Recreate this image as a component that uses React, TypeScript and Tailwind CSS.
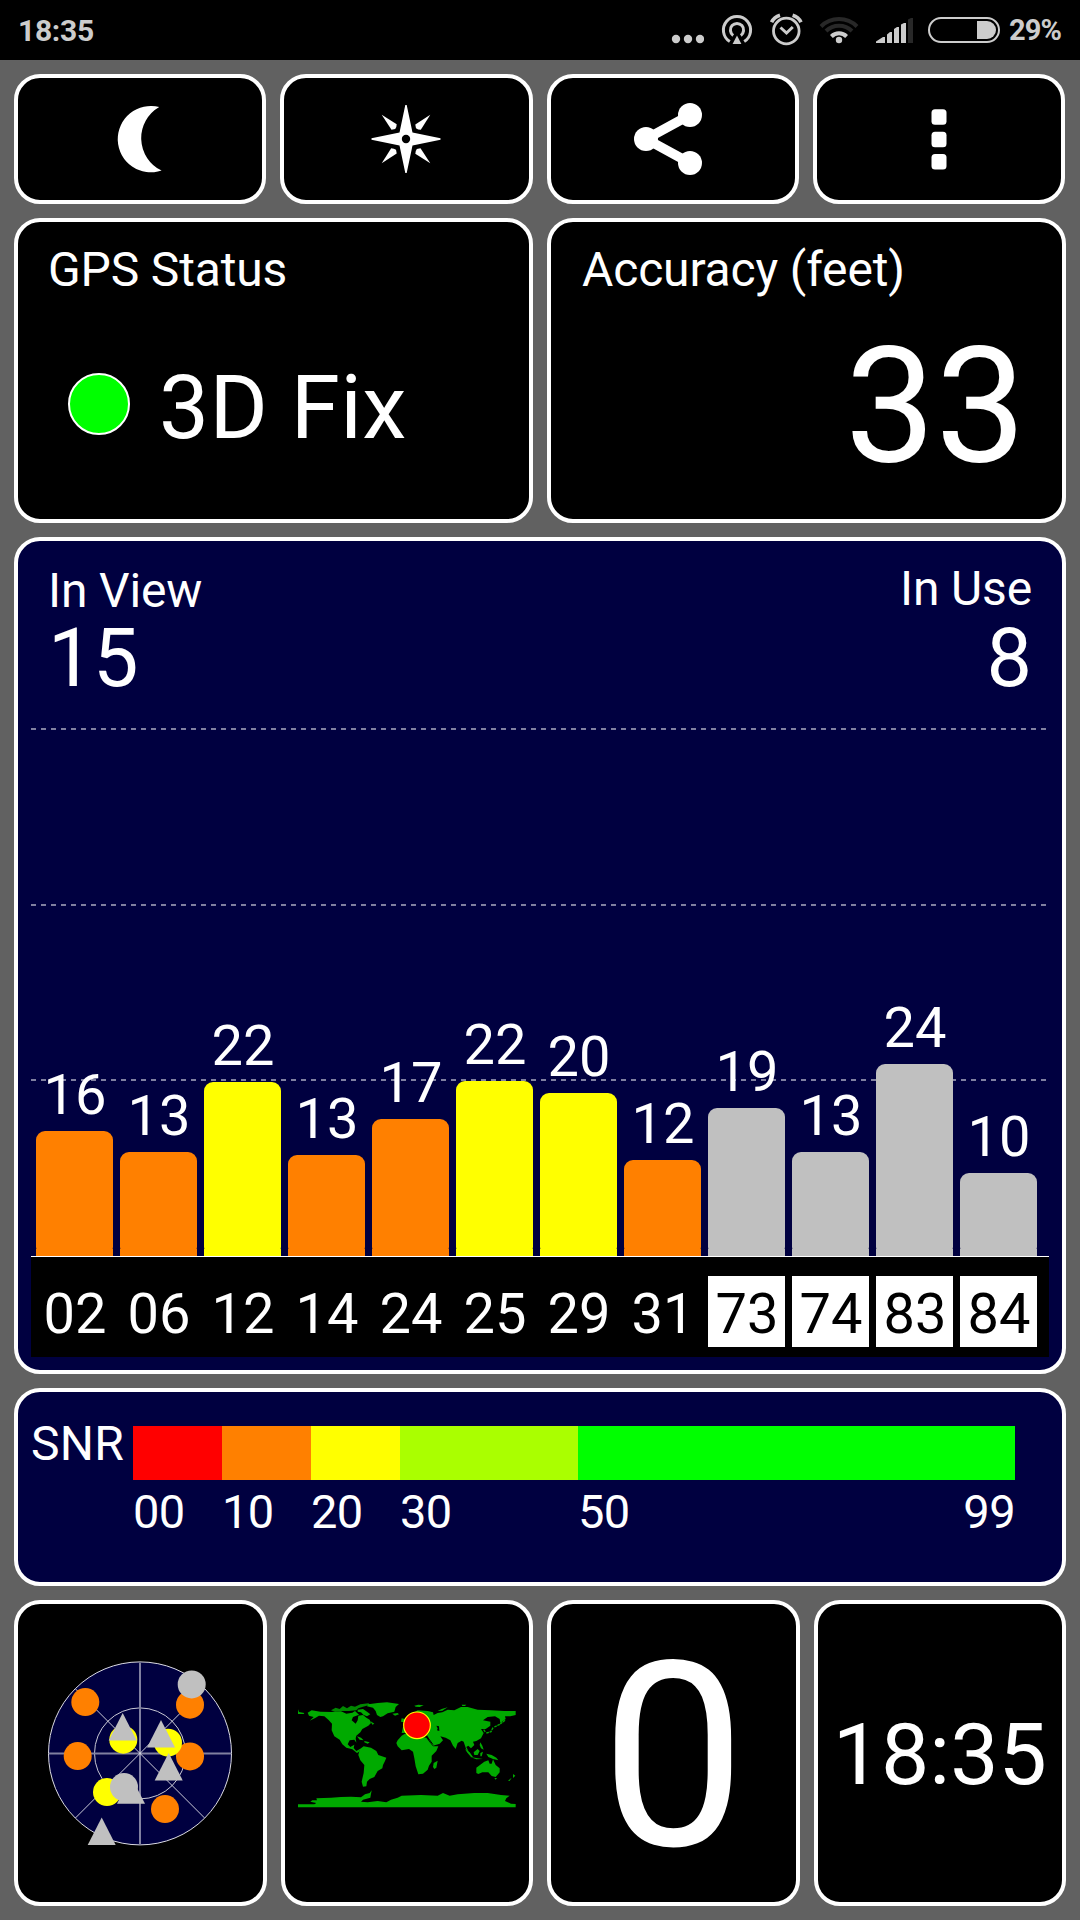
import type { ReactNode } from 'react';
import clsx from 'clsx';

interface Satellite {
  prn: string;
  snr: number;
  height: number;
  color: string;
  glonass?: boolean;
}

const SATELLITES: Satellite[] = [
  { prn: '02', snr: 16, height: 125, color: 'bg-[#ff8000]' },
  { prn: '06', snr: 13, height: 104, color: 'bg-[#ff8000]' },
  { prn: '12', snr: 22, height: 174, color: 'bg-[#ffff00]' },
  { prn: '14', snr: 13, height: 101, color: 'bg-[#ff8000]' },
  { prn: '24', snr: 17, height: 137, color: 'bg-[#ff8000]' },
  { prn: '25', snr: 22, height: 175, color: 'bg-[#ffff00]' },
  { prn: '29', snr: 20, height: 163, color: 'bg-[#ffff00]' },
  { prn: '31', snr: 12, height: 96, color: 'bg-[#ff8000]' },
  { prn: '73', snr: 19, height: 148, color: 'bg-[#c0c0c0]', glonass: true },
  { prn: '74', snr: 13, height: 104, color: 'bg-[#c0c0c0]', glonass: true },
  { prn: '83', snr: 24, height: 192, color: 'bg-[#c0c0c0]', glonass: true },
  { prn: '84', snr: 10, height: 83, color: 'bg-[#c0c0c0]', glonass: true },
];

const SNR_SCALE = [
  { from: '00', style: 'w-[89px]', color: 'bg-[#ff0000]' },
  { from: '10', style: 'w-[89px]', color: 'bg-[#ff8000]' },
  { from: '20', style: 'w-[89px]', color: 'bg-[#ffff00]' },
  { from: '30', style: 'w-[178px]', color: 'bg-[#aaff00]' },
  { from: '50', to: '99', style: 'w-[437px]', color: 'bg-[#00ff00]' },
];

function Card({ className, children }: { className?: string; children: ReactNode }) {
  return (
    <div className={clsx('rounded-[26px] border-4 border-white', className)}>{children}</div>
  );
}

function StatusBar() {
  return (
    <div className="flex h-[60px] items-center justify-between bg-black pl-[18px] text-[#cccccc]">
      <span className="mt-px text-[30px] leading-none font-bold tracking-[-0.3px]">18:35</span>

      <div className="flex w-[409px] items-center">
        <svg width="33" height="60" viewBox="671 0 33 60" fill="currentColor">
          <circle cx="676" cy="39" r="4.2" />
          <circle cx="688" cy="39" r="4.2" />
          <circle cx="700" cy="39" r="4.2" />
        </svg>

        {/* 핫스팟 */}
        <svg className="ml-[17px]" width="32" height="60" viewBox="721 0 32 60" fill="none" stroke="currentColor" strokeWidth="3">
          <path d="M729.8 41.6A13.6 13.6 0 1 1 744.2 41.6" />
          <path d="M733.2 35.4A6.6 6.6 0 1 1 740.8 35.4" />
          <path d="M737 35.5L741.4 44H732.6Z" fill="currentColor" stroke="none" />
        </svg>

        {/* 알람 */}
        <svg className="ml-[17px]" width="33" height="60" viewBox="770 0 33 60" fill="none" stroke="currentColor" strokeWidth="2.8">
          <circle cx="786.3" cy="31" r="12.8" />
          <path d="M780.5 27.5L786.5 33L792.8 27" strokeWidth="3" />
          <path d="M771.6 22.2Q774 17 780 15.2" strokeWidth="3.6" />
          <path d="M801 22.2Q798.6 17 792.6 15.2" strokeWidth="3.6" />
        </svg>

        {/* 와이파이 */}
        <svg className="ml-4" width="40" height="60" viewBox="819 0 40 60" fill="none" strokeWidth="4">
          <path d="M821 26.5A25.5 25.5 0 0 1 857 26.5" stroke="#282828" />
          <path d="M826 31A18.5 18.5 0 0 1 852 31" stroke="#282828" />
          <path d="M831.4 36.5A10.8 10.8 0 0 1 846.6 36.5" stroke="currentColor" />
          <circle cx="839" cy="40" r="3.2" fill="currentColor" />
        </svg>

        {/* 신호 세기 */}
        <svg className="ml-4" width="39" height="60" viewBox="875 0 39 60" fill="currentColor">
          <path d="M876 43V41.5L883 37H885V43Z" />
          <path d="M887 43V34.5L890 32H892V43Z" />
          <path d="M894 43V29L897 27H899V43Z" />
          <path d="M901 43V24.5L904 23H906V43Z" />
          <path d="M908 43V19.5L911 18H913V43Z" fill="#282828" />
        </svg>

        <div className="ml-[14px] flex h-[26px] w-[72px] items-center justify-end rounded-full border-2 border-current pr-[2px]">
          <div className="h-[18px] w-[19px] rounded-r-full bg-current" />
        </div>
        <span className="mt-px ml-[9px] text-[29px] leading-none font-bold tracking-[-0.9px]">29%</span>
      </div>
    </div>
  );
}

function Toolbar() {
  const button = 'flex h-[130px] items-center justify-center bg-black';

  return (
    <div className="mr-px grid grid-cols-4 gap-[14px]">
      <Card className={button}>
        <svg width="80" height="80" viewBox="-40.8 -40 80 80" fill="white">
          <path d="M18.4 -32A33.2 33.2 0 1 0 20.8 31.6A36 36 0 0 1 18.4 -32Z" />
        </svg>
      </Card>
      <Card className={button}>
        <svg width="80" height="80" viewBox="-40 -40 80 80" fill="white">
          <path d="M-.7 -34H.7L6.5 -6.5L34.5 -.7V.7L6.5 6.5L.7 34H-.7L-6.5 6.5L-34.5 .7V-.7L-6.5 -6.5Z" />
          {[0, 90, 180, 270].map((angle) => (
            <path
              key={angle}
              d="M24.3 -24.3L9.3 -14.5L10 -10.8Q12 -9.3 14.8 -9.3Z"
              transform={`rotate(${angle})`}
            />
          ))}
          <circle r="4.2" fill="black" />
        </svg>
      </Card>
      <Card className={button}>
        <svg width="80" height="80" viewBox="-40 -40 80 80" fill="white">
          <path d="M17 -24L-27 0L17 24" fill="none" stroke="white" strokeWidth="9.5" />
          <circle cx="-27" cy="0" r="12" />
          <circle cx="17" cy="-24" r="12" />
          <circle cx="17" cy="24" r="12" />
        </svg>
      </Card>
      <Card className={button}>
        <svg width="80" height="80" viewBox="-40 -40 80 80" fill="white">
          <rect x="-7.5" y="-29.7" width="15" height="15.4" rx="3.5" />
          <rect x="-7.5" y="-7.2" width="15" height="15.4" rx="3.5" />
          <rect x="-7.5" y="15" width="15" height="15.4" rx="3.5" />
        </svg>
      </Card>
    </div>
  );
}

function SatelliteChart() {
  return (
    <Card className="h-[837px] bg-[#000040]">
      <div className="flex h-[187px] justify-between pt-[26px] pr-[30px] pl-[30px]">
        <div>
          <div className="text-5xl leading-none tracking-[-0.15px]">In View</div>
          <div className="mt-[3px] text-[81px] leading-none tracking-[-0.5px]">15</div>
        </div>
        <div className="-mt-[2px] text-right">
          <div className="text-5xl leading-none tracking-[-0.15px]">In Use</div>
          <div className="mt-[5px] text-[81px] leading-none">8</div>
        </div>
      </div>

      <div className="mr-[13px] ml-[13px]">
        <div className="relative h-[528px]">
          {/* 기준선 */}
          <div className="absolute inset-0 flex flex-col gap-[173.5px]">
            {[75, 50, 25].map((level) => (
              <div
                key={level}
                className="mr-px h-[2px] bg-[repeating-linear-gradient(90deg,#8080a0_0_5px,transparent_5px_10px)]"
              />
            ))}
          </div>

          <div className="relative flex h-full items-end gap-[7px] pl-[5px]">
            {SATELLITES.map((sat) => (
              <div key={sat.prn} className="w-[77px] text-center">
                <div className="mb-2 pl-px text-[56px] leading-none">{sat.snr}</div>
                <div
                  className={clsx('flex flex-col justify-end rounded-[9px]', sat.color)}
                  style={{ height: sat.height }}
                >
                  <div className={clsx('h-[7px]', sat.color)} />
                </div>
              </div>
            ))}
          </div>
        </div>

        <div className="flex h-[101px] gap-[7px] border-t border-white bg-black pt-[19px] pl-[5px]">
          {SATELLITES.map((sat) => (
            <div
              key={sat.prn}
              className={clsx(
                'h-[71px] w-[77px] pt-[10px] pl-px text-center text-[56px] leading-none',
                sat.glonass && 'bg-white text-black',
              )}
            >
              {sat.prn}
            </div>
          ))}
        </div>
      </div>
    </Card>
  );
}

function SnrLegend() {
  return (
    <Card className="flex h-[198px] bg-[#000040] pt-[28px] pl-[13px]">
      <div className="w-[102px] text-5xl leading-none tracking-[0.3px]">SNR</div>
      <div className="mt-[5.5px] flex">
        {SNR_SCALE.map((step) => (
          <div key={step.from} className={step.style}>
            <div className={clsx('h-[54px]', step.color)} />
            <div className="mt-2 flex justify-between text-[47px] leading-none tracking-[-0.6px]">
              <span>{step.from}</span>
              {step.to && <span>{step.to}</span>}
            </div>
          </div>
        ))}
      </div>
    </Card>
  );
}

function SkyView() {
  return (
    <svg width="200" height="200" viewBox="-100 -100.4 200 200">
      <circle r="91.5" fill="#000040" stroke="#dcdce4" />
      <circle r="45.5" fill="none" stroke="#c8c8d4" />
      <path d="M-91 0H91M0 -91V91" stroke="#8080a0" strokeWidth="2" />
      <path d="M-64.5 -64.5L64.5 64.5M64.5 -64.5L-64.5 64.5" stroke="white" strokeWidth="0.8" />

      <g fill="#ff8000">
        <circle cx="-54.7" cy="-51.3" r="14" />
        <circle cx="50" cy="-48.7" r="14" />
        <circle cx="-62.3" cy="2.7" r="14" />
        <circle cx="50" cy="3" r="14" />
        <circle cx="25" cy="55.7" r="14" />
      </g>
      <g fill="#ffff00">
        <circle cx="-16.7" cy="-13.7" r="14" />
        <circle cx="28" cy="-10.7" r="14" />
        <circle cx="-33" cy="38.7" r="14" />
      </g>
      <g fill="#c0c0c0">
        <path d="M-17.3 -40.3L-3.3 -13H-31.3Z" />
        <path d="M21 -33.3L35 -6H7Z" />
        <path d="M28.7 -.5L42.7 27H14.7Z" />
        <path d="M-9 23L5 50.3H-23Z" />
        <path d="M-38.3 64L-24.3 91.6H-52.3Z" />
        <circle cx="51.7" cy="-69" r="14" />
        <circle cx="-16" cy="33.7" r="14" />
      </g>
    </svg>
  );
}

function WorldMap() {
  return (
    <svg width="218" height="109" viewBox="51 56 654 327">
      <g fill="#00aa00">
        {/* 북아메리카 */}
        <path d="M51 87L54 95L70 98L68 101L51 101Z" />
        <path d="M80 97L92 90L118 94L150 95L180 93L196 100L214 97L222 92L234 103L216 110L212 120L224 130L230 120L232 106L246 104L256 112L266 118L270 128L262 136L244 146L238 156L226 166L224 174L226 187L220 178L206 180L200 192L208 200L220 193L218 203L226 212L238 205L234 214L228 218L214 207L196 202L184 192L176 178L160 168L152 150L153 130L142 118L130 108L114 106L104 112L86 121L98 110L84 106Z" />
        <path d="M150 90L164 82L176 86L186 77L198 84L210 76L222 79L238 72L262 69L268 73L246 79L232 84L226 90L204 92L180 92L162 94Z" opacity="0.8" />
        <path d="M230 88L246 86L258 94L268 102L258 108L248 104L240 96L230 94ZM268 122L280 130L274 133ZM228 168L240 172L248 180L236 178ZM250 182L266 186L260 190L250 186Z" />
        <path d="M262 72L290 68L318 66L354 71L344 80L340 94L320 99L306 108L298 110L288 104L284 92L276 82L258 78ZM334 100L350 98L354 102L342 106Z" />
        {/* 남아메리카 */}
        <path d="M236 207L248 198L270 202L286 212L292 224L316 232L312 242L306 254L304 264L290 272L280 290L266 296L258 304L256 318L246 319L242 304L248 278L250 254L238 240L232 224Z" />
        {/* 아프리카 */}
        <path d="M350 180L362 166L372 160L400 162L420 170L436 172L446 186L456 198L472 198L466 212L452 226L452 244L444 256L440 268L426 280L412 282L404 258L400 234L396 214L384 206L362 210L350 198L346 188ZM458 248L470 241L466 262L460 266L456 260Z" />
        {/* 유라시아 */}
        <path d="M362 158L366 140L380 138L370 126L360 124L362 114L372 116L392 100L410 90L440 92L456 96L458 104L470 98L484 96L500 88L520 90L540 80L560 80L590 88L630 90L670 92L704 92L704 104L688 108L672 108L674 116L658 128L656 116L642 108L620 110L606 120L628 124L628 136L614 146L600 146L608 158L600 174L586 182L576 184L580 194L570 204L562 196L556 200L564 216L556 208L548 184L542 181L530 188L524 206L516 196L508 180L494 172L478 168L486 180L476 190L456 196L446 182L438 164L446 154L430 156L410 156L390 150L372 158Z" />
        <path d="M400 76L412 73L428 75L416 80L404 79ZM470 92L482 86L500 81L484 91ZM542 73L556 73L552 77L544 77Z" />
        <path d="M616 158L630 154L636 142M640 140L656 132L672 120M608 148L614 156" fill="none" stroke="#00aa00" strokeWidth="4" strokeDasharray="8 2" />
        {/* 동남아시아와 오세아니아 */}
        <path d="M552 206L566 216L576 230L570 230L558 216ZM578 216L590 206L596 212L590 224L580 224ZM568 230L590 234L606 236L586 237ZM598 186L604 196L608 208L600 204L596 194ZM598 218L606 214L602 228L598 228ZM616 220L632 224L646 232L652 240L636 236L622 230Z" />
        <path d="M586 262L600 252L610 244L622 240L626 250L632 250L636 237L644 254L656 264L656 276L644 290L632 287L622 276L604 276L592 281L586 278ZM640 293H648L644 298ZM696 281L703 286L696 293ZM692 292L686 302L681 301Z" />
        {/* 남극 */}
        <path d="M51 381V372L100 372L106 368L88 364L94 360L108 360L106 354L150 352L180 350L210 349L240 351L252 342L266 338L272 330L268 352L246 358L240 364L260 366L290 362L316 366L330 358L350 352L362 346L420 344L470 346L486 338L506 346L530 342L580 338L620 338L660 344L686 346L676 354L672 362L690 370L704 371V381Z" />
      </g>
      <path d="M466 136L474 138L475 152L468 150L470 144Z" fill="black" />
      <path d="M438 168L456 193" stroke="black" strokeWidth="3" />
      <circle cx="408" cy="135" r="40" fill="#ff0000" stroke="#ffff00" strokeWidth="3.5" />
    </svg>
  );
}

export default function App() {
  return (
    <div className="min-h-[1920px] w-[1080px] bg-[#616161] font-['Roboto',sans-serif] text-white">
      <StatusBar />

      <main className="flex flex-col gap-[14px] px-[14px] pt-[14px]">
        <Toolbar />

        {/* GPS 상태 / 정확도 */}
        <div className="grid grid-cols-2 gap-[14px]">
          <Card className="h-[305px] bg-black pt-6 pl-[30px]">
            <div className="text-5xl leading-none tracking-[-0.15px]">GPS Status</div>
            <div className="mt-[69px] flex pl-5">
              <div className="mt-[10px] size-[62px] rounded-full border-2 border-white bg-[#00ff00]" />
              <div className="ml-[29px] text-[89px] leading-none tracking-[0.4px]">3D Fix</div>
            </div>
          </Card>
          <Card className="h-[305px] bg-black pt-6 pr-[36px] pl-[31px]">
            <div className="text-5xl leading-none tracking-[-0.15px]">Accuracy (feet)</div>
            <div className="mt-[32px] text-right text-[161px] leading-none">33</div>
          </Card>
        </div>

        <SatelliteChart />
        <SnrLegend />

        <div className="grid grid-cols-4 gap-[14px]">
          <Card className="flex h-[306px] items-center justify-center bg-black">
            <SkyView />
          </Card>
          <Card className="flex h-[306px] items-center justify-center bg-black">
            <WorldMap />
          </Card>
          <Card className="h-[306px] bg-black pt-[24px] text-center text-[258px] leading-none">
            0
          </Card>
          <Card className="h-[306px] bg-black pt-[108px] text-center text-[86px] leading-none">
            18:35
          </Card>
        </div>
      </main>
    </div>
  );
}
